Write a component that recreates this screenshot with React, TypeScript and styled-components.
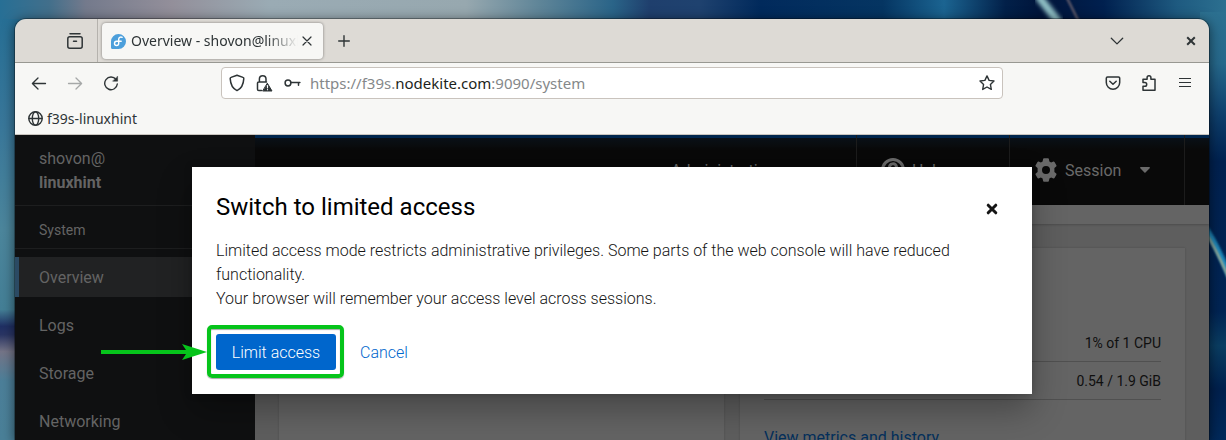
import React from "react";
import styled, { createGlobalStyle } from "styled-components";

const pageFont = `Roboto, "Noto Sans", sans-serif`;
const chromeFont = `"Noto Sans", "Open Sans", sans-serif`;

const GlobalStyle = createGlobalStyle`
  *, *::before, *::after { box-sizing: border-box; }
  body { margin: 0; background: #02234f; font-family: ${pageFont}; font-size: 16px; line-height: 24px; }
  button { font: inherit; color: inherit; border: 0; padding: 0; background: none; cursor: pointer; }
  a { text-decoration: none; }
  svg { display: block; flex: none; }
`;

const Desktop = styled.div`
  position: relative;
  display: flex;
  height: 100vh;
  padding: 19px 17px 0 15px;
  overflow: hidden;
`;

const Wallpaper = styled.svg`
  position: absolute;
  inset: 0;
  width: 100%;
  height: 100%;
`;

const Window = styled.div`
  position: relative;
  flex: 1;
  min-width: 0;
  display: flex;
  flex-direction: column;
  border-radius: 11px 11px 0 0;
  box-shadow: 0 0 0 1px rgba(0, 0, 0, 0.3), 0 2px 12px 1px rgba(0, 0, 0, 0.5);
  color: #2e3436;
`;

/* Browser chrome */

const TabBar = styled.div`
  display: flex;
  align-items: stretch;
  height: 44px;
  background: #dddad5;
  border-bottom: 1px solid #989892;
  border-radius: 11px 11px 0 0;
  overflow: hidden;
`;

const FirefoxView = styled.div`
  display: flex;
  align-items: center;
  justify-content: flex-end;
  width: 83px;
  padding-right: 13px;
  border-right: 1px solid #b5b2ad;
`;

const Tab = styled.div`
  display: flex;
  align-items: center;
  width: 221px;
  margin: 4px 3px 3px 4px;
  padding: 0 10px 0 8px;
  border-radius: 4px;
  background: #f7f7f5;
  box-shadow: 0 0 3px rgba(0, 0, 0, 0.45);
`;

const TabTitle = styled.span`
  flex: 1;
  min-width: 0;
  margin: 0 3px 0 4px;
  overflow: hidden;
  white-space: nowrap;
  font-family: ${chromeFont};
  font-size: 14px;
  mask-image: linear-gradient(to left, transparent, #000 32px);
`;

const IconButton = styled.button<{ $size?: number; $dim?: boolean }>`
  display: flex;
  align-items: center;
  justify-content: center;
  width: ${(p) => p.$size ?? 36}px;
  height: ${(p) => p.$size ?? 36}px;
  align-self: center;
  opacity: ${(p) => (p.$dim ? 0.4 : 1)};
`;

const Spacer = styled.div`
  flex: 1;
`;

const WindowActions = styled.div`
  display: flex;
  gap: 38px;
`;

const NavBar = styled.div`
  display: grid;
  grid-template-columns: 206px minmax(0, 1fr) 206px;
  align-items: center;
  height: 40px;
  background: #f7f7f5;
`;

const NavGroup = styled.div<{ $end?: boolean }>`
  display: flex;
  justify-content: ${(p) => (p.$end ? "flex-end" : "flex-start")};
  padding: 0 6px;
`;

const UrlBar = styled.div`
  display: flex;
  align-items: center;
  height: 32px;
  padding: 0 7px;
  background: #fff;
  border: 1px solid #c9c3bd;
  border-radius: 4px;
`;

const UrlIcons = styled.div`
  display: flex;
  align-items: center;
  gap: 11px;
  margin-right: 9px;
`;

const UrlText = styled.div`
  flex: 1;
  min-width: 0;
  overflow: hidden;
  white-space: nowrap;
  font-family: ${chromeFont};
  font-size: 15px;
  color: #85888a;
`;

const UrlHost = styled.span`
  color: #1c1f20;
`;

const BookmarkBar = styled.div`
  display: flex;
  align-items: center;
  height: 32px;
  padding-left: 13px;
  background: #f7f7f5;
  border-bottom: 1px solid #c9c5bf;
`;

const Bookmark = styled.a`
  display: flex;
  align-items: center;
  gap: 4px;
  font-family: ${chromeFont};
  font-size: 14px;
  color: #2e3436;
`;

/* Web console */

const Page = styled.div`
  position: relative;
  flex: 1;
  min-height: 0;
  display: flex;
`;

const Sidebar = styled.nav`
  width: 240px;
  flex: none;
  overflow: hidden;
  background: #0f1011;
  color: #646464;
`;

const Host = styled.div`
  padding: 12px 24px 10px;
  border-bottom: 1px solid #1d1e1f;
`;

const HostName = styled.div<{ $bold?: boolean }>`
  font-weight: ${(p) => (p.$bold ? 700 : 400)};
`;

const SectionTitle = styled.div`
  padding: 14px 24px 7px;
  border-bottom: 1px solid #1d1e1f;
  font-size: 14px;
  line-height: 21px;
`;

const NavList = styled.div`
  display: flex;
  flex-direction: column;
  gap: 8px;
  padding-top: 8px;
`;

const NavLink = styled.a<{ $active?: boolean }>`
  padding: 9px 20px 7px;
  border-left: 4px solid ${(p) => (p.$active ? "#2b4a63" : "transparent")};
  background: ${(p) => (p.$active ? "#212223" : "transparent")};
  color: inherit;
`;

const Main = styled.main`
  flex: 1;
  min-width: 0;
  display: flex;
  flex-direction: column;
  overflow: hidden;
  background: #5e5e5e;
`;

const Masthead = styled.header`
  display: flex;
  justify-content: flex-end;
  flex: none;
  height: 70px;
  padding-right: 24px;
  background: linear-gradient(#00264d 3px, #091017 3px, #090909 15px);
  color: #6a6a6a;
`;

const MastheadItem = styled.button<{ $width: number }>`
  display: flex;
  align-items: center;
  gap: 7px;
  min-width: ${(p) => p.$width}px;
  padding: 0 24px;
  border-right: 1px solid #1c1c1c;
`;

const MastheadLabel = styled.span`
  padding-top: 2px;
`;

const Caret = styled.svg`
  margin-left: 12px;
`;

const Breadcrumb = styled.div`
  position: relative;
  flex: none;
  height: 19px;
  background: #646464;
  box-shadow: 0 1px 2px rgba(0, 0, 0, 0.2);
`;

const Cards = styled.div`
  flex: 1;
  display: grid;
  grid-template-columns: repeat(2, minmax(0, 1fr));
  gap: 16px;
  padding: 24px 24px 0;
`;

const Card = styled.section`
  padding: 75px 24px 0;
  background: #646464;
  box-shadow: 0 0 2px rgba(0, 0, 0, 0.2);
`;

const Usage = styled.table`
  width: 100%;
  border-collapse: collapse;
  font-size: 14px;
  line-height: 21px;
  color: #0f0f0f;
`;

const UsageCell = styled.td`
  height: 38px;
  padding: 3px 0 0;
  border-bottom: 1px solid #505050;
  text-align: right;
`;

const MetricsLink = styled.a`
  display: block;
  margin-top: 26px;
  color: #04305c;
`;

/* Dialog */

const Backdrop = styled.div`
  position: absolute;
  inset: 0;
  display: flex;
  align-items: flex-start;
  justify-content: center;
  padding: 32px 24px 0;
`;

const Dialog = styled.div`
  width: 100%;
  max-width: 840px;
  padding: 24px;
  background: #fff;
  color: #151515;
  font-weight: 300;
  box-shadow: 0 16px 32px rgba(3, 3, 3, 0.3), 0 0 8px rgba(3, 3, 3, 0.2);
`;

const DialogHeader = styled.div`
  display: flex;
  align-items: flex-start;
  justify-content: space-between;
  height: 31px;
`;

const DialogTitle = styled.h1`
  margin: 0;
  font-size: 24px;
  font-weight: 400;
  line-height: 32px;
  color: #000;
`;

const CloseButton = styled(IconButton)`
  width: 32px;
  align-self: flex-start;
`;

const DialogBody = styled.div`
  padding: 17px 0 23px;
`;

const DialogFooter = styled.div`
  display: flex;
  gap: 8px;
`;

const ActionButton = styled.button<{ $primary?: boolean }>`
  height: 36px;
  min-width: ${(p) => (p.$primary ? 120 : 0)}px;
  padding: 2px ${(p) => (p.$primary ? 12 : 16)}px 0;
  border-radius: 3px;
  background: ${(p) => (p.$primary ? "#0066cc" : "transparent")};
  color: ${(p) => (p.$primary ? "#fff" : "#0066cc")};
`;

const Highlighted = styled.div`
  position: relative;
`;

const HighlightFrame = styled.div`
  position: absolute;
  inset: -9px -8px -8px -9px;
  border: 4px solid #06c41b;
  border-radius: 5px;
  box-shadow: 0 1px 1px rgba(0, 0, 0, 0.35), inset 0 1px 1px rgba(0, 0, 0, 0.35);
  pointer-events: none;
`;

const HighlightArrow = styled.svg`
  position: absolute;
  top: 9px;
  right: 129px;
  pointer-events: none;
`;

const stroke = { fill: "none", stroke: "currentColor", strokeLinecap: "round", strokeLinejoin: "round" } as const;

const WallpaperArt = () => (
  <Wallpaper viewBox="0 0 1226 440" preserveAspectRatio="none" aria-hidden="true">
    <defs>
      <linearGradient id="sky">
        <stop offset="0" stopColor="#276f95" />
        <stop offset="0.04" stopColor="#426f8b" />
        <stop offset="0.07" stopColor="#747a8c" />
        <stop offset="0.14" stopColor="#938f9a" />
        <stop offset="0.22" stopColor="#9aabb4" />
        <stop offset="0.38" stopColor="#97a8af" />
        <stop offset="0.44" stopColor="#5f8598" />
        <stop offset="0.5" stopColor="#2a6488" />
        <stop offset="0.53" stopColor="#1f3f6d" />
        <stop offset="0.57" stopColor="#1f426f" />
        <stop offset="0.62" stopColor="#012a5c" />
        <stop offset="0.72" stopColor="#053562" />
        <stop offset="0.77" stopColor="#1b6491" />
        <stop offset="0.82" stopColor="#022049" />
        <stop offset="0.85" stopColor="#00143a" />
        <stop offset="0.9" stopColor="#00204f" />
        <stop offset="0.96" stopColor="#1e5a80" />
        <stop offset="1" stopColor="#2c7090" />
      </linearGradient>
      <linearGradient id="left" x2="0" y2="1">
        <stop offset="0" stopColor="#276f95" />
        <stop offset="0.25" stopColor="#39779a" />
        <stop offset="0.5" stopColor="#4c869c" />
        <stop offset="0.69" stopColor="#447f96" />
        <stop offset="0.73" stopColor="#1f2f63" />
        <stop offset="0.75" stopColor="#2a3563" />
        <stop offset="0.79" stopColor="#747487" />
        <stop offset="0.86" stopColor="#4c7f99" />
        <stop offset="1" stopColor="#4a8098" />
      </linearGradient>
      <linearGradient id="right" x2="0" y2="1">
        <stop offset="0" stopColor="#2c7090" />
        <stop offset="0.12" stopColor="#26688b" />
        <stop offset="0.24" stopColor="#0e3f6c" />
        <stop offset="0.35" stopColor="#00214f" />
        <stop offset="0.7" stopColor="#012453" />
        <stop offset="0.78" stopColor="#0a3d62" />
        <stop offset="0.88" stopColor="#00204d" />
        <stop offset="1" stopColor="#01295a" />
      </linearGradient>
      <filter id="soft">
        <feGaussianBlur stdDeviation="2" />
      </filter>
      <filter id="fine">
        <feGaussianBlur stdDeviation="1" />
      </filter>
    </defs>
    <rect width="1226" height="440" fill="url(#sky)" />
    <rect y="19" width="24" height="421" fill="url(#left)" />
    <rect x="1200" y="12" width="26" height="428" fill="url(#right)" />
    <path d="M1038-4Q1046 6 1060 24" fill="none" stroke="#8fbfc4" strokeWidth="8" filter="url(#soft)" />
    <path d="M1066-4Q1072 8 1080 24" fill="none" stroke="#6d6470" strokeWidth="2" filter="url(#fine)" />
    <path d="M1202 223Q1216 243 1230 277" fill="none" stroke="#1f86b8" strokeWidth="6" filter="url(#fine)" />
    <path d="M1202 227Q1215 246 1230 281" fill="none" stroke="#b5b893" strokeWidth="2" filter="url(#fine)" />
  </Wallpaper>
);

const navItems = ["Overview", "Logs", "Storage", "Networking"];
const usage = ["1% of 1 CPU", "0.54 / 1.9 GiB"];

export default function App() {
  return (
    <>
      <GlobalStyle />
      <Desktop>
        <WallpaperArt />
        <Window>
          <TabBar>
            <FirefoxView>
              <IconButton $size={18} aria-label="Firefox View">
                <svg width="18" height="18" viewBox="0 0 18 18" {...stroke} strokeWidth="1.5">
                  <path d="M4 1.700h10" />
                  <rect x="1.800" y="4.800" width="14.400" height="11.400" rx="2" />
                  <path d="M7.500 9.300h3" />
                </svg>
              </IconButton>
            </FirefoxView>
            <Tab>
              <svg width="17" height="17" viewBox="0 0 17 17">
                <path d="M8.500 1a7.500 7.500 0 1 1 0 15H2.500A1.500 1.500 0 0 1 1 14.500v-6A7.500 7.500 0 0 1 8.500 1z" fill="#4c9fdb" />
                <path d="M12.200 4.300c-1.900-.8-3.500.2-3.500 2v4.200a2.100 2.100 0 1 1-2.200-2.200h4.700" fill="none" stroke="#fff" strokeWidth="1.400" strokeLinecap="round" />
              </svg>
              <TabTitle>Overview - shovon@linuxhint</TabTitle>
              <IconButton $size={12} aria-label="Close tab">
                <svg width="10" height="10" viewBox="0 0 10 10" {...stroke} strokeWidth="1.200">
                  <path d="M1 1l8 8M9 1L1 9" />
                </svg>
              </IconButton>
            </Tab>
            <IconButton aria-label="New tab">
              <svg width="12" height="12" viewBox="0 0 12 12" {...stroke} strokeWidth="1.400">
                <path d="M6 .7v10.600M.7 6h10.600" />
              </svg>
            </IconButton>
            <Spacer />
            <WindowActions>
              <IconButton aria-label="List all tabs">
                <svg width="14" height="8" viewBox="0 0 14 8" {...stroke} strokeWidth="1.300">
                  <path d="M1.300 1.200L7 6.900l5.700-5.700" />
                </svg>
              </IconButton>
              <IconButton aria-label="Close window">
                <svg width="10" height="10" viewBox="0 0 10 10" {...stroke} strokeWidth="2" strokeLinecap="butt">
                  <path d="M1.200 1.200l7.600 7.600M8.800 1.200L1.200 8.800" />
                </svg>
              </IconButton>
            </WindowActions>
          </TabBar>

          <NavBar>
            <NavGroup>
              <IconButton aria-label="Back">
                <svg width="16" height="14" viewBox="0 0 16 14" {...stroke} strokeWidth="1.300">
                  <path d="M14.500 7.500H1.500M7 2L1.400 7.500 7 13" />
                </svg>
              </IconButton>
              <IconButton $dim aria-label="Forward">
                <svg width="16" height="14" viewBox="0 0 16 14" {...stroke} strokeWidth="1.300">
                  <path d="M1.500 7.500h13M9 2L14.600 7.500 9 13" />
                </svg>
              </IconButton>
              <IconButton aria-label="Reload">
                <svg width="16" height="16" viewBox="0 0 16 16" {...stroke} strokeWidth="1.400">
                  <path d="M13 4.500A6.300 6.300 0 1 0 14.300 9" />
                  <path d="M14.600 1.500v4.700H9.900z" fill="currentColor" strokeWidth=".5" />
                </svg>
              </IconButton>
            </NavGroup>
            <UrlBar>
              <UrlIcons>
                <svg width="16" height="18" viewBox="0 0 16 18" {...stroke} strokeWidth="1.500">
                  <path d="M8 1.200l6 2.200c.6.200.9.600.8 1.200C14.500 10 12.500 14.500 8 16.600 3.500 14.500 1.500 10 1.200 4.600c0-.6.200-1 .8-1.200z" />
                </svg>
                <svg width="17" height="18" viewBox="0 0 17 18" {...stroke} strokeWidth="1.500">
                  <path d="M3.400 8V5a3.300 3.300 0 0 1 6.600 0v3M5.500 16.500H2.800A1.300 1.300 0 0 1 1.500 15.200V9.300A1.300 1.300 0 0 1 2.800 8h7.700" />
                  <path d="M11.500 9.500l4.500 7.500H7z" fill="currentColor" strokeWidth="1" />
                  <path d="M11.500 11.500v2.300M11.500 15.600v.1" stroke="#fff" strokeWidth="1.200" />
                </svg>
                <svg width="17" height="10" viewBox="0 0 17 10" {...stroke} strokeWidth="1.500">
                  <circle cx="4" cy="5" r="2.900" />
                  <path d="M7.100 4.500h8.800M14.500 4.500v2.700" />
                </svg>
              </UrlIcons>
              <UrlText role="textbox" aria-label="Address" tabIndex={0}>
                https://f39s.<UrlHost>nodekite.com</UrlHost>:9090/system
              </UrlText>
              <IconButton $size={16} aria-label="Bookmark this page">
                <svg width="16" height="16" viewBox="0 0 16 16" {...stroke} strokeWidth="1.400">
                  <path d="M8 .9l2.100 4.500 4.900.6-3.600 3.400.9 5L8 12l-4.300 2.400.9-5L1 6l4.900-.6z" />
                </svg>
              </IconButton>
            </UrlBar>
            <NavGroup $end>
              <IconButton aria-label="Pocket">
                <svg width="16" height="16" viewBox="0 0 16 16" {...stroke} strokeWidth="1.500">
                  <path d="M2.500 2h11A1.200 1.200 0 0 1 14.700 3.200v4.300A6.600 6.600 0 0 1 1.300 7.500V3.200A1.200 1.200 0 0 1 2.500 2z" />
                  <path d="M4.800 6.200L8 9.300l3.200-3.100" />
                </svg>
              </IconButton>
              <IconButton aria-label="Extensions">
                <svg width="16" height="18" viewBox="0 0 16 18" {...stroke} strokeWidth="1.500">
                  <path d="M2 8V5.200h4.100V3.600a1.900 1.900 0 0 1 3.800 0v1.600h4.100v11H2v-4h1.900a1.800 1.800 0 0 0 0-3.600H2z" />
                </svg>
              </IconButton>
              <IconButton aria-label="Menu">
                <svg width="12" height="12" viewBox="0 0 12 12" {...stroke} strokeWidth="1.200" strokeLinecap="butt">
                  <path d="M0 1.500h12M0 5.500h12M0 9.500h12" />
                </svg>
              </IconButton>
            </NavGroup>
          </NavBar>

          <BookmarkBar>
            <Bookmark href="#bookmark">
              <svg width="15" height="15" viewBox="0 0 15 15" {...stroke} strokeWidth="1.400">
                <circle cx="7.500" cy="7.500" r="6.700" />
                <ellipse cx="7.500" cy="7.500" rx="3.200" ry="6.700" />
                <path d="M1 7.500h13" />
              </svg>
              f39s-linuxhint
            </Bookmark>
          </BookmarkBar>

          <Page>
            <Sidebar>
              <Host>
                <HostName>shovon@</HostName>
                <HostName $bold>linuxhint</HostName>
              </Host>
              <SectionTitle>System</SectionTitle>
              <NavList>
                {navItems.map((item, i) => (
                  <NavLink key={item} href={`#${item.toLowerCase()}`} $active={i === 0}>
                    {item}
                  </NavLink>
                ))}
              </NavList>
            </Sidebar>
            <Main>
              <Masthead>
                <MastheadItem $width={210}>
                  <MastheadLabel>Administrative access</MastheadLabel>
                </MastheadItem>
                <MastheadItem $width={153}>
                  <svg width="24" height="24" viewBox="0 0 24 24" fill="none" stroke="currentColor" strokeWidth="3">
                    <circle cx="12" cy="12" r="10.500" />
                    <path d="M8.500 9.500a3.500 3.500 0 1 1 5 3c-1 .5-1.500 1-1.500 2M12 16v3" />
                  </svg>
                  <MastheadLabel>Help</MastheadLabel>
                </MastheadItem>
                <MastheadItem $width={175}>
                  <svg width="24" height="24" viewBox="0 0 24 24" fill="currentColor" fillRule="evenodd">
                    <path d="M10 .2h4a1 1 0 0 1 .9.800l.5 2.400 1.700 1 2.300-.8a1 1 0 0 1 1.100.4l1.900 3.300a1 1 0 0 1-.2 1.200l-1.800 1.600v3.800l1.800 1.600a1 1 0 0 1 .2 1.200l-1.900 3.300a1 1 0 0 1-1.100.4l-2.300-.8-1.700 1-.5 2.400a1 1 0 0 1-.9.800h-4a1 1 0 0 1-.9-.8l-.5-2.400-1.700-1-2.300.8a1 1 0 0 1-1.100-.4l-1.900-3.300a1 1 0 0 1 .2-1.200l1.800-1.600v-3.800L1.800 8.500a1 1 0 0 1-.2-1.200L3.500 4a1 1 0 0 1 1.100-.4l2.300.8 1.700-1L9.100 1a1 1 0 0 1 .9-.8zM12 8a4 4 0 1 0 0 8 4 4 0 0 0 0-8z" />
                  </svg>
                  <MastheadLabel>Session</MastheadLabel>
                  <Caret width="10" height="6" viewBox="0 0 10 6" fill="currentColor">
                    <path d="M.8 0h8.400c.7 0 1 .8.500 1.200L5.500 5.600a.8.800 0 0 1-1.100 0L.3 1.200C-.2.800.1 0 .8 0z" />
                  </Caret>
                </MastheadItem>
              </Masthead>
              <Breadcrumb />
              <Cards>
                <Card />
                <Card>
                  <Usage>
                    <tbody>
                      {usage.map((value) => (
                        <tr key={value}>
                          <UsageCell>{value}</UsageCell>
                        </tr>
                      ))}
                    </tbody>
                  </Usage>
                  <MetricsLink href="#metrics">View metrics and history</MetricsLink>
                </Card>
              </Cards>
            </Main>

            <Backdrop>
              <Dialog role="dialog" aria-modal="true" aria-labelledby="dialog-title">
                <DialogHeader>
                  <DialogTitle id="dialog-title">Switch to limited access</DialogTitle>
                  <CloseButton aria-label="Close">
                    <svg width="12" height="12" viewBox="0 0 12 12" {...stroke} strokeWidth="3">
                      <path d="M2.200 2.200l7.600 7.600M9.800 2.200L2.200 9.800" />
                    </svg>
                  </CloseButton>
                </DialogHeader>
                <DialogBody>
                  Limited access mode restricts administrative privileges. Some parts of the web console will have
                  reduced functionality.
                  <br />
                  Your browser will remember your access level across sessions.
                </DialogBody>
                <DialogFooter>
                  <Highlighted>
                    <ActionButton $primary>Limit access</ActionButton>
                    <HighlightFrame />
                    <HighlightArrow width="106" height="18" viewBox="0 0 106 18" fill="#06c41b">
                      <path d="M0 7h85l-4-6 25 8-25 8 4-6H0z" />
                    </HighlightArrow>
                  </Highlighted>
                  <ActionButton>Cancel</ActionButton>
                </DialogFooter>
              </Dialog>
            </Backdrop>
          </Page>
        </Window>
      </Desktop>
    </>
  );
}
